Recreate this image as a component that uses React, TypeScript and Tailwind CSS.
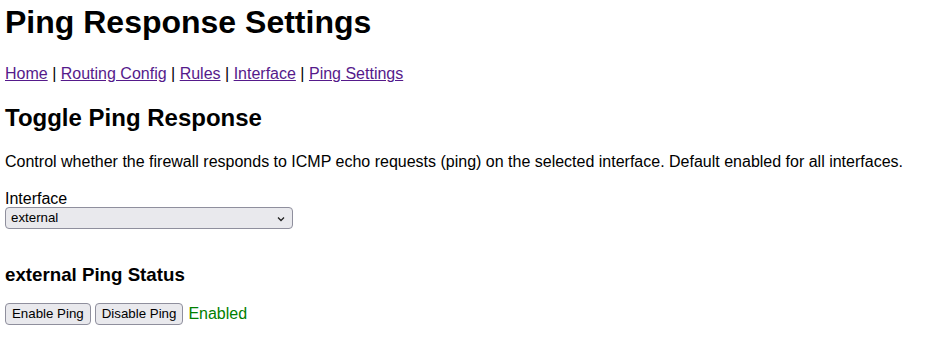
export default function App() {
  const font = { fontFamily: '"Liberation Sans", Arial, sans-serif' };
  return (
    <div className="bg-white text-black px-[5px] pt-[4px]" style={font}>
      <h1 className="text-[32px] font-bold leading-[37px] mb-[24px]">Ping Response Settings</h1>
      <p className="text-[16px] leading-[18px]">
        <a href="#" className="text-[#551a8b] underline">Home</a> |{" "}
        <a href="#" className="text-[#551a8b] underline">Routing Config</a> |{" "}
        <a href="#" className="text-[#551a8b] underline">Rules</a> |{" "}
        <a href="#" className="text-[#551a8b] underline">Interface</a> |{" "}
        <a href="#" className="text-[#551a8b] underline">Ping Settings</a>
      </p>
      <h2 className="text-[24px] font-bold leading-[28px] mt-[21px] mb-[21px]">Toggle Ping Response</h2>
      <p className="text-[16px] leading-[18px]">
        Control whether the firewall responds to ICMP echo requests (ping) on the selected interface. Default enabled for all interfaces.
      </p>
      <div className="mt-[19px]">
        <label className="block text-[16px] leading-[17px]">Interface</label>
        <div className="relative w-[288px] h-[22px] border border-[#8f8f9d] rounded-[4px] bg-[#e9e9ed] flex items-center px-[5px] text-[13.3px]">
          <span>external</span>
          <svg className="absolute right-[7px] top-[8px]" width="8" height="6" viewBox="0 0 8 6">
            <path d="M1 1.5 L4 4.5 L7 1.5" fill="none" stroke="#222" strokeWidth="1.3" />
          </svg>
        </div>
      </div>
      <h3 className="text-[18.72px] font-bold leading-[22px] mt-[35px] mb-[16px]">external Ping Status</h3>
      <div className="flex items-center">
        <button className="h-[22px] px-[6px] border border-[#8f8f9d] rounded-[4px] bg-[#e9e9ed] text-[13.3px]">Enable Ping</button>
        <button className="ml-[4px] h-[22px] px-[6px] border border-[#8f8f9d] rounded-[4px] bg-[#e9e9ed] text-[13.3px]">Disable Ping</button>
        <span className="ml-[5px] text-[16px] text-[#008000]">Enabled</span>
      </div>
    </div>
  );
}
